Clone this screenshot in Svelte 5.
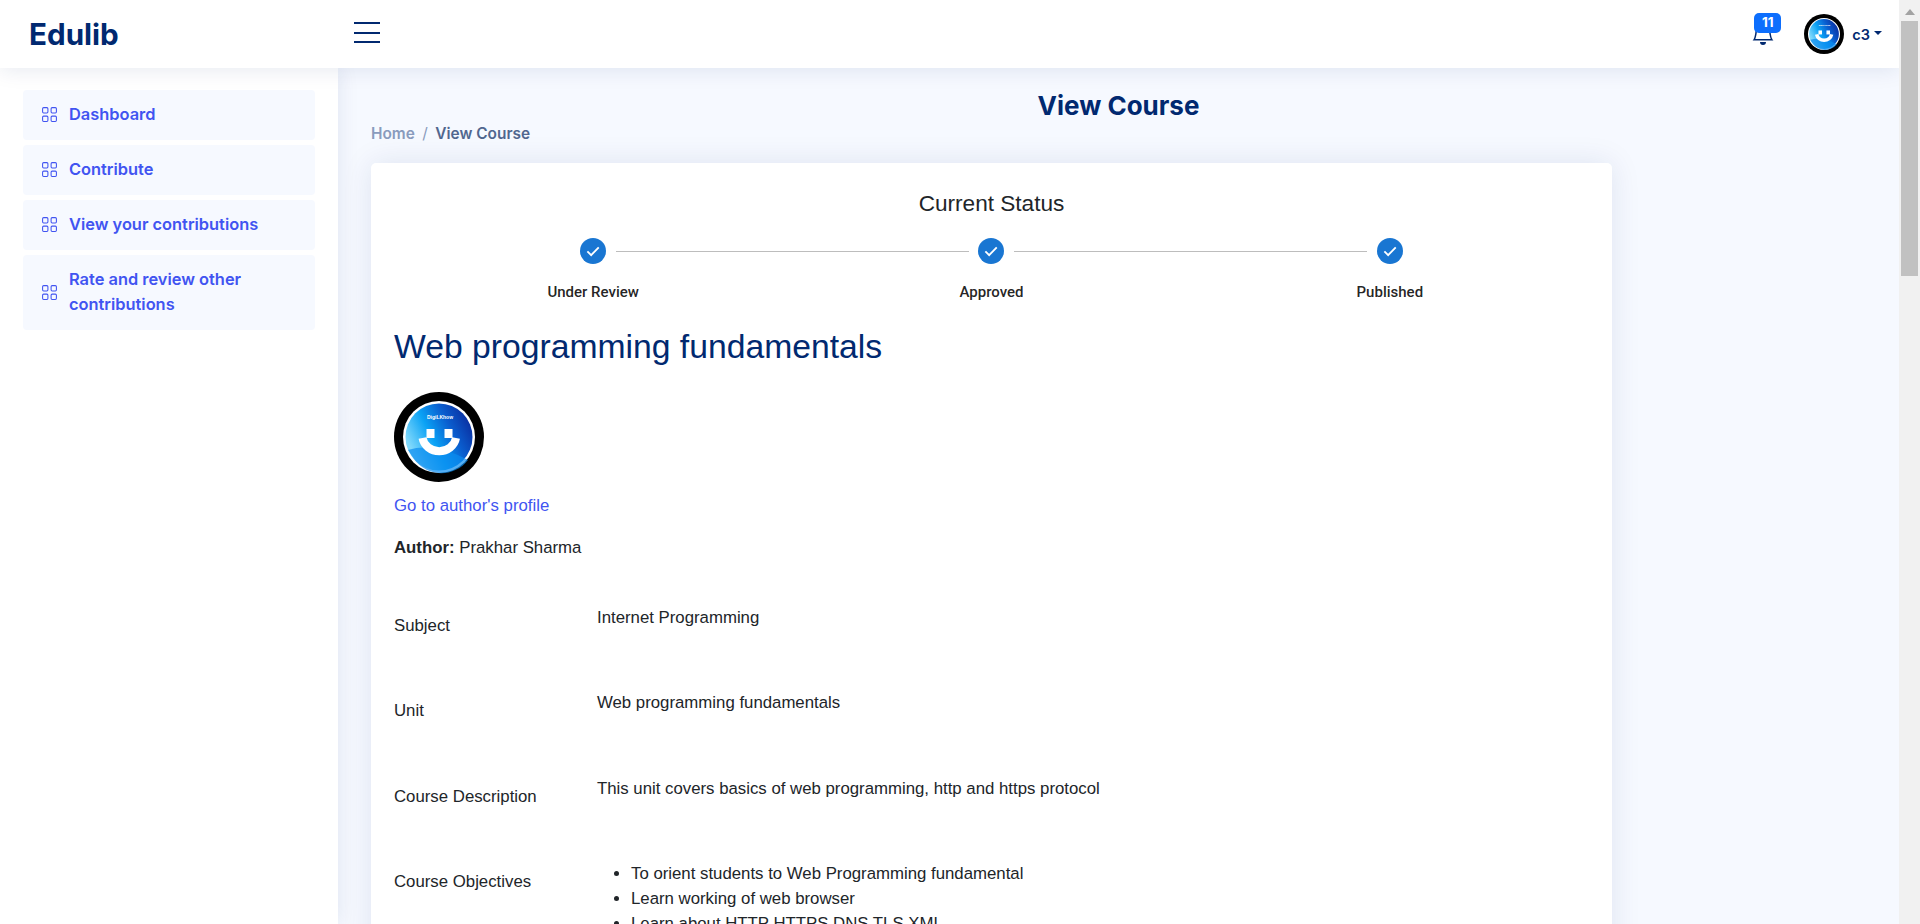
<script lang="ts">
  const menu = ['Dashboard', 'Contribute', 'View your contributions', 'Rate and review other contributions'];
  const steps = ['Under Review', 'Approved', 'Published'];
  const details = [
    { label: 'Subject', value: 'Internet Programming' },
    { label: 'Unit', value: 'Web programming fundamentals' },
    { label: 'Course Description', value: 'This unit covers basics of web programming, http and https protocol' }
  ];
  const objectives = [
    'To orient students to Web Programming fundamental',
    'Learn working of web browser',
    'Learn about HTTP HTTPS DNS TLS XML'
  ];
</script>

{#snippet avatar(id)}
  <svg viewBox="0 0 90 90" class="avatar-svg">
    <defs>
      <linearGradient {id} x1="0.05" y1="0.6" x2="0.95" y2="0.15">
        <stop offset="0" stop-color="#7fd8fb" />
        <stop offset="0.35" stop-color="#0aa2f5" />
        <stop offset="0.65" stop-color="#0a5fd0" />
        <stop offset="1" stop-color="#0a2a9c" />
      </linearGradient>
    </defs>
    <circle cx="45" cy="45" r="45" fill="#000" />
    <circle cx="45" cy="45" r="36" fill="#fff" />
    <circle cx="45" cy="45" r="33.5" fill={`url(#${id})`} />
    <path d="M14 58 Q40 50 74 68 A33.5 33.5 0 0 1 20 67 Z" fill="#0a8cf0" opacity="0.7" />
    <text x="46" y="27" class="logo-text">DigiLKhow</text>
    <rect x="32.5" y="37" width="8" height="9" fill="#fff" />
    <rect x="50.5" y="37" width="8" height="9" fill="#fff" />
    <path d="M28.5 46 A17 16 0 0 0 62 46" fill="none" stroke="#fff" stroke-width="8" />
  </svg>
{/snippet}

<div class="app">
  <div class="page">
    <header class="topbar">
      <div class="brand">Edulib</div>
      <svg class="burger" viewBox="0 0 26 22" width="26" height="22" shape-rendering="crispEdges">
        <path d="M0 1h26M0 11h26M0 20h26" stroke="#012970" stroke-width="2" fill="none" />
      </svg>
      <div class="top-right">
        <div class="bell">
          <svg viewBox="0 0 16 16" width="24" height="24">
            <path fill="#012970" d="M8 16a2 2 0 0 0 2-2H6a2 2 0 0 0 2 2zM8 1.918l-.797.161A4.002 4.002 0 0 0 4 6c0 .628-.134 2.197-.459 3.742-.16.767-.376 1.566-.663 2.258h10.244c-.287-.692-.502-1.49-.663-2.258C12.134 8.197 12 6.628 12 6a4.002 4.002 0 0 0-3.203-3.92L8 1.917zM14.22 12c.223.447.481.801.78 1H1c.299-.199.557-.553.78-1C2.68 10.2 3 6.88 3 6c0-2.42 1.72-4.44 4.005-4.901a1 1 0 1 1 1.99 0A5.002 5.002 0 0 1 13 6c0 .88.32 4.2 1.22 6z" />
          </svg>
          <span class="badge">11</span>
        </div>
        <div class="top-avatar">{@render avatar('grad-top')}</div>
        <span class="user">c3</span>
        <span class="caret"></span>
      </div>
    </header>

    <div class="body">
      <aside class="sidebar">
        {#each menu as item}
          <div class="nav-link">
            <svg viewBox="0 0 16 16" width="17" height="17">
              <path fill="#4154f1" d="M1 2.5A1.5 1.5 0 0 1 2.5 1h3A1.5 1.5 0 0 1 7 2.5v3A1.5 1.5 0 0 1 5.500 7h-3A1.500 1.500 0 0 1 1 5.500v-3zM2.500 2a.5.5 0 0 0-.5.5v3a.5.5 0 0 0 .5.5h3a.5.500 0 0 0 .5-.5v-3a.5.500 0 0 0-.5-.5h-3zm6.500.5A1.500 1.500 0 0 1 10.500 1h3A1.500 1.500 0 0 1 15 2.500v3A1.500 1.500 0 0 1 13.500 7h-3A1.500 1.500 0 0 1 9 5.500v-3zm1.500-.5a.5.500 0 0 0-.5.5v3a.5.500 0 0 0 .5.5h3a.5.500 0 0 0 .5-.5v-3a.5.500 0 0 0-.5-.5h-3zM1 10.500A1.500 1.500 0 0 1 2.500 9h3A1.500 1.500 0 0 1 7 10.500v3A1.500 1.500 0 0 1 5.500 15h-3A1.500 1.500 0 0 1 1 13.500v-3zm1.500-.5a.5.500 0 0 0-.5.5v3a.5.500 0 0 0 .5.5h3a.5.500 0 0 0 .5-.5v-3a.5.500 0 0 0-.5-.5h-3zm6.500.5A1.500 1.500 0 0 1 10.500 9h3a1.500 1.500 0 0 1 1.500 1.500v3a1.500 1.500 0 0 1-1.500 1.500h-3A1.500 1.500 0 0 1 9 13.500v-3zm1.500-.5a.5.500 0 0 0-.5.5v3a.5.500 0 0 0 .5.5h3a.5.500 0 0 0 .5-.5v-3a.5.500 0 0 0-.5-.5h-3z" />
            </svg>
            <span>{item}</span>
          </div>
        {/each}
      </aside>

      <main class="main">
        <h1 class="page-title">View Course</h1>
        <nav class="crumbs">
          <span class="home">Home</span>
          <span class="sep">/</span>
          <span class="current">View Course</span>
        </nav>

        <section class="card">
          <h2 class="status-title">Current Status</h2>
          <div class="stepper">
            {#each steps as step, i}
              <div class="step">
                {#if i > 0}<span class="connector"></span>{/if}
                <svg class="step-icon" viewBox="0 0 24 24" width="26" height="26">
                  <circle cx="12" cy="12" r="12" fill="#1976d2" />
                  <path d="M6.800 12.300l3.500 3.500 7-7.200" fill="none" stroke="#fff" stroke-width="1.700" />
                </svg>
                <span class="step-label">{step}</span>
              </div>
            {/each}
          </div>

          <h2 class="course-title">Web programming fundamentals</h2>
          <div class="author-avatar">{@render avatar('grad-author')}</div>
          <a class="profile-link" href="#profile">Go to author's profile</a>
          <p class="author"><strong>Author:</strong> Prakhar Sharma</p>

          <div class="details">
            {#each details as row}
              <div class="row">
                <div class="label">{row.label}</div>
                <div class="value">{row.value}</div>
              </div>
            {/each}
            <div class="row">
              <div class="label">Course Objectives</div>
              <ul class="value objectives">
                {#each objectives as o}
                  <li>{o}</li>
                {/each}
              </ul>
            </div>
          </div>
        </section>
      </main>
    </div>
  </div>

  <div class="scrollbar">
    <span class="arrow"></span>
    <span class="thumb"></span>
  </div>
</div>

<style>
  :global(body) {
    margin: 0;
    overflow: hidden;
    font-family: 'Liberation Sans', Arial, sans-serif;
    color: #212529;
  }

  .app {
    display: flex;
    height: 924px;
    overflow: hidden;
    background: #f6f9ff;
  }

  .page {
    flex: 1;
    min-width: 0;
    display: flex;
    flex-direction: column;
    overflow: hidden;
  }

  .topbar {
    flex: none;
    height: 68px;
    display: flex;
    align-items: center;
    background: #fff;
    box-shadow: 0 2px 20px rgba(1, 41, 112, 0.1);
    position: relative;
    z-index: 3;
    padding: 0 17px 0 29px;
  }

  .brand {
    width: 325px;
    font-family: Inter, sans-serif;
    font-size: 29.6px;
    font-weight: 700;
    color: #012970;
  }

  .burger {
    margin-bottom: 2px;
  }

  .top-right {
    margin-left: auto;
    display: flex;
    align-items: center;
  }

  .bell {
    position: relative;
    width: 24px;
    height: 24px;
    margin-right: 29px;
    top: -1px;
  }

  .bell svg {
    display: block;
  }

  .badge {
    position: absolute;
    left: 3px;
    top: -8px;
    width: 27px;
    height: 20px;
    border-radius: 5px;
    background: #0d6efd;
    color: #fff;
    font-family: Inter, sans-serif;
    font-size: 13.5px;
    font-weight: 700;
    line-height: 19px;
    text-align: center;
  }

  .top-avatar {
    width: 40px;
    height: 40px;
    margin-right: 8px;
  }

  .avatar-svg {
    display: block;
    width: 100%;
    height: 100%;
  }

  .logo-text {
    fill: #fff;
    font-family: 'Liberation Sans', sans-serif;
    font-size: 5px;
    font-weight: 700;
    text-anchor: middle;
  }

  .user {
    font-family: Inter, sans-serif;
    font-size: 14.5px;
    font-weight: 600;
    color: #012970;
  }

  .caret {
    margin-left: 4px;
    border-top: 4px solid #012970;
    border-left: 4px solid transparent;
    border-right: 4px solid transparent;
    margin-bottom: 2px;
  }

  .body {
    flex: 1;
    min-height: 0;
    display: flex;
  }

  .sidebar {
    flex: none;
    width: 338px;
    box-sizing: border-box;
    padding: 22px 23px 0;
    background: #fff;
    box-shadow: 0 0 20px rgba(1, 41, 112, 0.1);
    position: relative;
    z-index: 2;
    display: flex;
    flex-direction: column;
    gap: 5px;
  }

  .nav-link {
    display: flex;
    align-items: center;
    gap: 11px;
    padding: 12px 18px 13px;
    background: #f6f9ff;
    border-radius: 4px;
    color: #4154f1;
    font-family: Inter, sans-serif;
    font-size: 16.4px;
    font-weight: 600;
    line-height: 25px;
  }

  .nav-link svg {
    flex: none;
  }

  .main {
    flex: 1;
    min-width: 0;
    box-sizing: border-box;
    padding: 21px 33px 0;
    display: flex;
    flex-direction: column;
  }

  .page-title {
    margin: 0;
    text-align: center;
    font-family: Inter, sans-serif;
    font-size: 26px;
    font-weight: 700;
    line-height: 34px;
    color: #012970;
  }

  .crumbs {
    display: flex;
    gap: 7.5px;
    font-family: Inter, sans-serif;
    font-size: 15.4px;
    font-weight: 600;
    line-height: 22px;
  }

  .home {
    color: #899bbd;
  }

  .sep {
    color: #899bbd;
    font-weight: 400;
  }

  .current {
    color: #51678f;
  }

  .card {
    flex: none;
    width: 1241px;
    box-sizing: border-box;
    margin-top: 17.5px;
    padding: 25px 23px;
    background: #fff;
    border-radius: 5px;
    box-shadow: 0 0 30px rgba(1, 41, 112, 0.1);
  }

  .status-title {
    margin: 0;
    text-align: center;
    font-size: 22.6px;
    font-weight: 400;
    line-height: 32px;
    color: #212529;
  }

  .stepper {
    display: grid;
    grid-template-columns: repeat(3, 1fr);
    margin-top: 18px;
  }

  .step {
    position: relative;
    display: flex;
    flex-direction: column;
    align-items: center;
  }

  .connector {
    position: absolute;
    top: 13px;
    left: calc(-50% + 23px);
    right: calc(50% + 23px);
    border-top: 1px solid #bdbdbd;
  }

  .step-label {
    margin-top: 18px;
    font-family: Roboto, sans-serif;
    font-size: 15px;
    font-weight: 500;
    line-height: 20px;
    color: rgba(0, 0, 0, 0.87);
  }

  .course-title {
    margin: 24px 0 0;
    font-size: 33.7px;
    font-weight: 400;
    line-height: 40px;
    color: #012970;
  }

  .author-avatar {
    width: 90px;
    height: 90px;
    margin-top: 26px;
  }

  .profile-link {
    display: block;
    margin-top: 12px;
    font-size: 16.8px;
    line-height: 24px;
    color: #4154f1;
    text-decoration: none;
  }

  .author {
    margin: 18.5px 0 0;
    font-size: 16.8px;
    line-height: 24px;
  }

  .details {
    margin-top: 31.5px;
  }

  .row {
    display: grid;
    grid-template-columns: 203px 1fr;
    min-height: 85.5px;
  }

  .label {
    padding-top: 22px;
    font-size: 16.8px;
    line-height: 24px;
  }

  .value {
    padding-top: 14px;
    font-size: 16.8px;
    line-height: 24px;
  }

  .objectives {
    margin: 0;
    padding-left: 34px;
    padding-bottom: 0;
  }

  .objectives li {
    margin-bottom: 1px;
  }

  .scrollbar {
    flex: none;
    width: 21px;
    background: #f1f1f1;
    display: flex;
    flex-direction: column;
    align-items: center;
  }

  .arrow {
    margin-top: 9px;
    border-bottom: 6px solid #a3a3a3;
    border-left: 5px solid transparent;
    border-right: 5px solid transparent;
  }

  .thumb {
    margin-top: 6px;
    width: 17px;
    height: 255px;
    background: #c1c1c1;
  }
</style>
